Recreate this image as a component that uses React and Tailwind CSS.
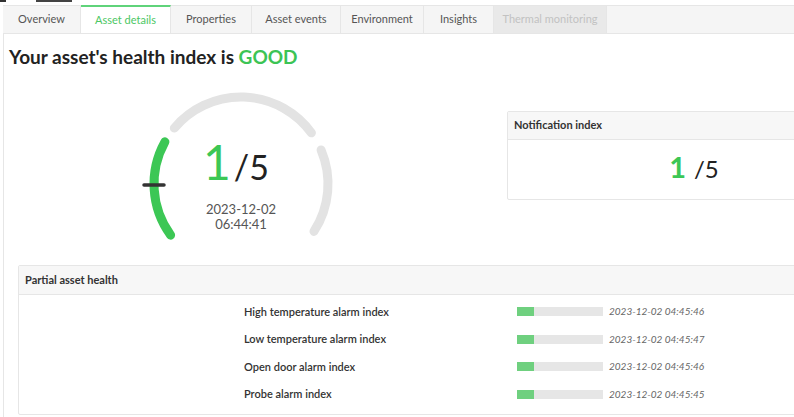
import React from "react";

const tabs = [
  { label: "Overview", w: "w-[78px]" },
  { label: "Asset details", w: "w-[90px]", active: true },
  { label: "Properties", w: "w-[81px]" },
  { label: "Asset events", w: "w-[89px]" },
  { label: "Environment", w: "w-[83px]" },
  { label: "Insights", w: "w-[70px]" },
  { label: "Thermal monitoring", w: "w-[113px]", disabled: true },
];

const partials = [
  { label: "High temperature alarm index", date: "2023-12-02 04:45:46" },
  { label: "Low temperature alarm index", date: "2023-12-02 04:45:47" },
  { label: "Open door alarm index", date: "2023-12-02 04:45:46" },
  { label: "Probe alarm index", date: "2023-12-02 04:45:45" },
];

// gauge helpers, angles in degrees, math orientation (0 = right, counter-clockwise)
const CX = 105;
const CY = 96;
const R = 87;
function pt(a) {
  const rad = (a * Math.PI) / 180;
  return [CX + R * Math.cos(rad), CY - R * Math.sin(rad)];
}
function arc(a1, a2) {
  const [x1, y1] = pt(a1);
  const [x2, y2] = pt(a2);
  const large = a1 - a2 > 180 ? 1 : 0;
  return `M ${x1.toFixed(2)} ${y1.toFixed(2)} A ${R} ${R} 0 ${large} 1 ${x2.toFixed(2)} ${y2.toFixed(2)}`;
}

function Gauge() {
  return (
    <div className="relative w-[210px] h-[160px] shrink-0">
      <svg width="210" height="160" viewBox="0 0 210 160" className="absolute inset-0">
        <path d={arc(140, 36)} fill="none" stroke="#e3e3e3" strokeWidth="9" strokeLinecap="round" />
        <path d={arc(23, -33)} fill="none" stroke="#e3e3e3" strokeWidth="9" strokeLinecap="round" />
        <path d={arc(216, 151)} fill="none" stroke="#3cc755" strokeWidth="9" strokeLinecap="round" />
        <line x1="8" y1="97" x2="28" y2="97" stroke="#333" strokeWidth="3.5" strokeLinecap="round" />
      </svg>
      <div className="absolute left-[67px] top-[50px] flex items-baseline leading-none">
        <span className="text-[48px] font-normal text-[#3cc755]">1</span>
        <span className="text-[34px] font-normal text-[#222] ml-[3px]">/5</span>
      </div>
      <div className="absolute left-0 right-0 top-[114px] text-center text-[13px] leading-[15px] text-[#555]">
        <div>2023-12-02</div>
        <div>06:44:41</div>
      </div>
    </div>
  );
}

export default function App() {
  return (
    <div className="w-[794px] h-[417px] overflow-hidden bg-white relative" style={{ fontFamily: "Lato, 'Noto Sans', sans-serif" }}>
      <div className="h-[5px] flex">
        <div className="w-[6px] h-[2px] bg-[#333]" />
        <div className="w-[30px]" />
        <div className="w-[36px] h-[2px] bg-[#444]" />
      </div>

      <div className="ml-[3px] h-[29px] flex bg-[#f5f5f5] border-y border-[#e6e6e6]">
        {tabs.map((t) => (
          <div
            key={t.label}
            className={`${t.w} shrink-0 flex items-center justify-center text-[11px] border-r border-[#e6e6e6] ${
              t.active
                ? "bg-white text-[#4cc764] border-t-2 border-t-[#5fd37a] -mt-px"
                : t.disabled
                ? "bg-[#e9e9e9] text-[#c2c2c2]"
                : "text-[#555]"
            }`}
          >
            {t.label}
          </div>
        ))}
      </div>

      <div className="ml-[3px] border-l border-[#e6e6e6] h-[400px]">
        <h1 className="pl-[5px] pt-[9px] text-[19px] leading-[28px] font-bold text-[#222]">
          Your asset's health index is <span className="text-[#3cc455]">GOOD</span>
        </h1>

        <div className="flex mt-[17px]">
          <div className="ml-[132px]">
            <Gauge />
          </div>
          <div className="ml-[161px] mt-[23px] w-[374px] h-[89px] shrink-0 border border-[#e6e6e6] rounded-[2px]">
            <div className="h-[28px] bg-[#f7f7f7] border-b border-[#e6e6e6] flex items-center px-[6px] text-[11px] font-bold text-[#333]">
              Notification index
            </div>
            <div className="flex items-baseline justify-center pt-[12px] leading-none">
              <span className="text-[29px] font-bold text-[#3cc755]">1</span>
              <span className="text-[24px] text-[#222] ml-[8px]">/5</span>
            </div>
          </div>
        </div>

        <div className="ml-[14px] mt-[17px] w-[800px] h-[150px] border border-[#e6e6e6] rounded-[2px]">
          <div className="h-[29px] bg-[#f7f7f7] border-b border-[#e6e6e6] flex items-center px-[6px] text-[11px] font-bold text-[#333]">
            Partial asset health
          </div>
          <div className="pt-[3px]">
            {partials.map((p) => (
              <div key={p.label} className="h-[27.6px] flex items-center">
                <div className="ml-[225px] w-[273px] text-[11px] font-semibold text-[#333]">{p.label}</div>
                <div className="w-[86px] h-[9px] bg-[#e6e6e6] flex">
                  <div className="w-[17px] h-full bg-[#6fd07f]" />
                </div>
                <div className="ml-[6px] text-[10px] italic text-[#666]">{p.date}</div>
              </div>
            ))}
          </div>
        </div>
      </div>
    </div>
  );
}
